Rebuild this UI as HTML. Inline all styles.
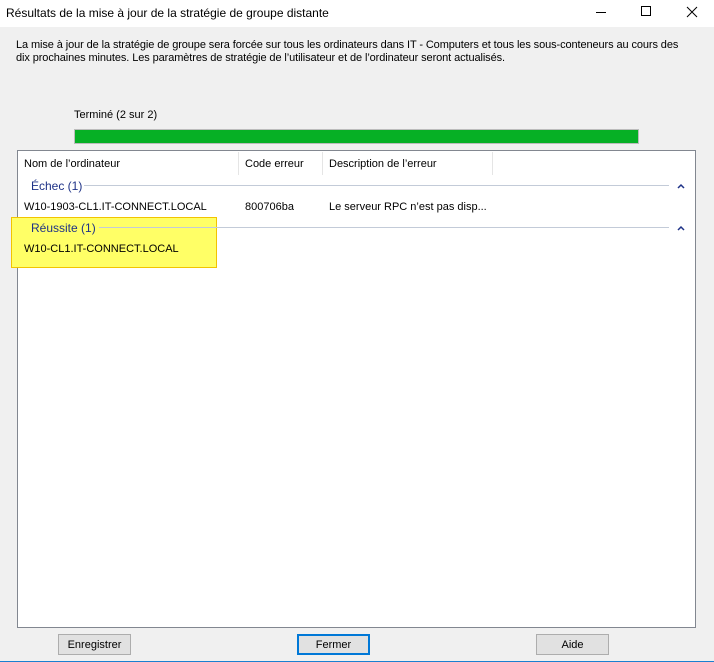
<!DOCTYPE html>
<html><head><meta charset="utf-8"><style>
*{margin:0;padding:0;box-sizing:border-box}
body{width:714px;height:662px;background:#f0f0f0;font-family:"Liberation Sans",sans-serif;font-size:11px;color:#000;position:relative;overflow:hidden}
.a{position:absolute;white-space:nowrap}
.btn{position:absolute;top:634px;height:21px;width:73px;background:#e1e1e1;border:1px solid #adadad;text-align:center;line-height:21px;font-size:11px}
</style></head><body>
<div class="a" style="left:0;top:0;width:714px;height:27px;background:#fff"></div>
<div class="a" style="left:6px;top:6px;font-size:12px">Résultats de la mise à jour de la stratégie de groupe distante</div>
<div class="a" style="left:596px;top:12px;width:10px;height:1px;background:#000"></div>
<div class="a" style="left:641px;top:6px;width:10px;height:10px;border:1px solid #000"></div>
<svg class="a" style="left:686px;top:6px" width="12" height="12"><path d="M1 1L11 11M11 1L1 11" stroke="#000" stroke-width="1"/></svg>
<div class="a" style="left:16px;top:39px;line-height:13px;letter-spacing:-0.1px">La mise à jour de la stratégie de groupe sera forcée sur tous les ordinateurs dans IT - Computers et tous les sous-conteneurs au cours des<br>dix prochaines minutes. Les paramètres de stratégie de l’utilisateur et de l’ordinateur seront actualisés.</div>
<div class="a" style="left:74px;top:109px">Terminé (2 sur 2)</div>
<div class="a" style="left:74px;top:129px;width:565px;height:15px;background:#06b025;border:1px solid #bcbcbc"></div>
<div class="a" style="left:17px;top:150px;width:679px;height:478px;background:#fff;border:1px solid #828790"></div>
<div class="a" style="left:238px;top:152px;width:1px;height:23px;background:#e5e5e5"></div>
<div class="a" style="left:322px;top:152px;width:1px;height:23px;background:#e5e5e5"></div>
<div class="a" style="left:492px;top:152px;width:1px;height:23px;background:#e5e5e5"></div>
<div class="a" style="left:24px;top:158px">Nom de l’ordinateur</div>
<div class="a" style="left:245px;top:158px">Code erreur</div>
<div class="a" style="left:329px;top:158px">Description de l’erreur</div>
<div class="a" style="left:11px;top:217px;width:206px;height:51px;background:#ffff66;border:1px solid #f2c400"></div>
<div class="a" style="left:83px;top:185px;width:586px;height:1px;background:#c3cbd8"></div>
<div class="a" style="left:31px;top:179px;color:#1e3287;font-size:12px;background:#fff;padding-right:2px">Échec (1)</div>
<svg class="a" style="left:677px;top:183px" width="8" height="6"><path d="M1 5L4 2L7 5" stroke="#1e3287" stroke-width="1.5" fill="none"/></svg>
<div class="a" style="left:24px;top:201px">W10-1903-CL1.IT-CONNECT.LOCAL</div>
<div class="a" style="left:245px;top:201px">800706ba</div>
<div class="a" style="left:329px;top:201px">Le serveur RPC n’est pas disp...</div>
<div class="a" style="left:217px;top:227px;width:452px;height:1px;background:#c3cbd8"></div>
<div class="a" style="left:96px;top:227px;width:121px;height:1px;background:#c3cbd8"></div>
<div class="a" style="left:31px;top:221px;color:#1e3287;font-size:12px;background:#ffff66;padding-right:3px">Réussite (1)</div>
<svg class="a" style="left:677px;top:225px" width="8" height="6"><path d="M1 5L4 2L7 5" stroke="#1e3287" stroke-width="1.5" fill="none"/></svg>
<div class="a" style="left:24px;top:243px">W10-CL1.IT-CONNECT.LOCAL</div>
<div class="btn" style="left:58px">Enregistrer</div>
<div class="btn" style="left:297px;border:2px solid #0078d7;line-height:19px">Fermer</div>
<div class="btn" style="left:536px">Aide</div>
<div class="a" style="left:0;top:661px;width:714px;height:1px;background:#1a7fd0"></div>
</body></html>
